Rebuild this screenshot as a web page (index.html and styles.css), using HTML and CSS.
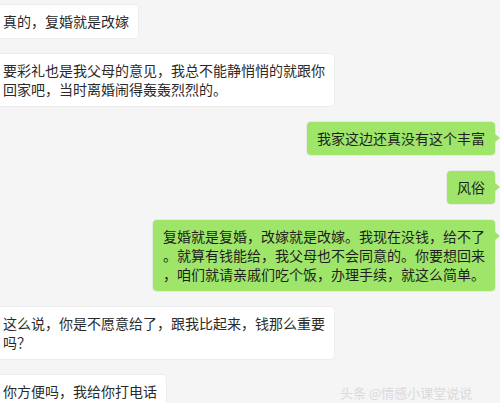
FILE: index.html
```html
<!DOCTYPE html>
<html lang="zh-CN">
  <head>
    <meta charset="UTF-8" />
    <meta name="viewport" content="width=device-width, initial-scale=1.0" />
    <title>聊天记录</title>
    <link rel="stylesheet" href="styles.css">
  </head>
  <body>
    <div class="chat">
      <div class="msg left">
        <div class="bubble">真的，复婚就是改嫁</div>
      </div>
      <div class="msg left">
        <div class="bubble">要彩礼也是我父母的意见，我总不能静悄悄的就跟你<br>回家吧，当时离婚闹得轰轰烈烈的。</div>
      </div>
      <div class="msg right">
        <div class="bubble">我家这边还真没有这个丰富</div>
      </div>
      <div class="msg right">
        <div class="bubble">风俗</div>
      </div>
      <div class="msg right">
        <div class="bubble">复婚就是复婚，改嫁就是改嫁。我现在没钱，给不了<br>。就算有钱能给，我父母也不会同意的。你要想回来<br>，咱们就请亲戚们吃个饭，办理手续，就这么简单。</div>
      </div>
      <div class="msg left">
        <div class="bubble">这么说，你是不愿意给了，跟我比起来，钱那么重要<br>吗？</div>
      </div>
      <div class="msg left">
        <div class="bubble">你方便吗，我给你打电话</div>
      </div>
    </div>
    <div class="watermark">头条 @情感小课堂说说</div>
  </body>
</html>
```

FILE: styles.css
```css
html,
body {
  margin: 0;
  height: 403px;
  overflow: hidden;
}

body {
  background: #f5f5f5;
  font-family: "Noto Sans CJK SC", "Noto Sans", sans-serif;
  font-size: 14px;
  color: #2a2a2a;
  position: relative;
}

.chat {
  display: flex;
  flex-direction: column;
  gap: 16px;
  padding: 5px 5px 0 0;
}

.msg {
  display: flex;
}

.msg.right {
  justify-content: flex-end;
}

.bubble {
  position: relative;
  line-height: 19px;
  padding: 7px 10px;
  border-radius: 4px;
  white-space: nowrap;
}

.left .bubble {
  background: #fff;
  padding-left: 3px;
  padding-right: 9px;
  border-radius: 0 4px 4px 0;
  box-shadow: 0 0 0 1px rgba(0, 0, 0, 0.03);
}

.right .bubble {
  background: #9ee56a;
  color: #1e1e1e;
  box-shadow: 0 0 0 1px rgba(60, 120, 30, 0.08);
}

/* tail on the sender side */
.right .bubble::after {
  content: "";
  position: absolute;
  right: -5px;
  top: 12px;
  border-top: 4px solid transparent;
  border-bottom: 4px solid transparent;
  border-left: 5px solid #9ee56a;
}

.watermark {
  position: absolute;
  left: 340px;
  top: 385px;
  font-size: 13px;
  line-height: 16px;
  color: #dadada;
  white-space: nowrap;
}
```
